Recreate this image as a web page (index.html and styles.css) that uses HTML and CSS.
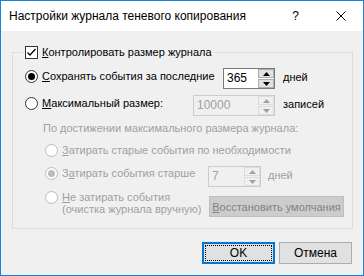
FILE: index.html
```html
<!DOCTYPE html>
<html lang="ru">
<head>
  <meta charset="UTF-8" />
  <title>Настройки журнала теневого копирования</title>
  <link rel="stylesheet" href="styles.css">
</head>
<body>

  <div class="window">
    <div class="titlebar">
      <span class="title">Настройки журнала теневого копирования</span>
      <span class="caption-btn help">?</span>
      <span class="caption-btn">
        <svg width="10" height="10" viewBox="0 0 10 10"><path d="M0.5 0.5 L9.5 9.5 M9.5 0.5 L0.5 9.5" stroke="#000" stroke-width="1" fill="none"/></svg>
      </span>
    </div>

    <div class="client">
      <fieldset class="group">
        <legend class="opt">
          <span class="checkbox">
            <svg width="11" height="11" viewBox="0 0 11 11"><path d="M1.5 5.5 L4 8 L9.5 2" stroke="#000" stroke-width="1.3" fill="none"/></svg>
          </span>
          <span><u>К</u>онтролировать размер журнала</span>
        </legend>

        <div class="row first">
          <div class="opt w-keep"><span class="radio on"></span><span><u>С</u>охранять события за последние</span></div>
          <div class="spinbox sb-keep">
            <span class="value">365</span>
            <span class="spin">
              <span class="arrow"><svg width="7" height="4" viewBox="0 0 7 4"><path d="M0 4 L3.5 0 L7 4 Z"/></svg></span>
              <span class="arrow"><svg width="7" height="4" viewBox="0 0 7 4"><path d="M0 0 L3.5 4 L7 0 Z"/></svg></span>
            </span>
          </div>
          <span class="unit">дней</span>
        </div>

        <div class="row">
          <div class="opt w-max"><span class="radio"></span><span><u>М</u>аксимальный размер:</span></div>
          <div class="spinbox sb-max disabled">
            <span class="value">10000</span>
            <span class="spin">
              <span class="arrow"><svg width="7" height="4" viewBox="0 0 7 4"><path d="M0 4 L3.5 0 L7 4 Z"/></svg></span>
              <span class="arrow"><svg width="7" height="4" viewBox="0 0 7 4"><path d="M0 0 L3.5 4 L7 0 Z"/></svg></span>
            </span>
          </div>
          <span class="unit">записей</span>
        </div>

        <div class="caption">По достижении максимального размера журнала:</div>

        <div class="row sub plain">
          <div class="opt off"><span class="radio"></span><span><u>З</u>атирать старые события по необходимости</span></div>
        </div>

        <div class="row sub old">
          <div class="opt off w-old"><span class="radio on"></span><span>З<u>а</u>тирать события старше</span></div>
          <div class="spinbox sb-old disabled">
            <span class="value">7</span>
            <span class="spin">
              <span class="arrow"><svg width="7" height="4" viewBox="0 0 7 4"><path d="M0 4 L3.5 0 L7 4 Z"/></svg></span>
              <span class="arrow"><svg width="7" height="4" viewBox="0 0 7 4"><path d="M0 0 L3.5 4 L7 0 Z"/></svg></span>
            </span>
          </div>
          <span class="unit off">дней</span>
        </div>

        <div class="row sub last">
          <div class="opt off w-none"><span class="radio"></span><span><u>Н</u>е затирать события<br>(очистка журнала вручную)</span></div>
          <span class="btn btn-reset"><span><u>В</u>осстановить умолчания</span></span>
        </div>
      </fieldset>

      <div class="actions">
        <span class="btn default"><span class="focus">OK</span></span>
        <span class="btn">Отмена</span>
      </div>
    </div>
  </div>

</body>
</html>
```

FILE: styles.css
```css
body {
  margin: 0;
  font-family: "Liberation Sans", Arial, sans-serif;
  font-size: 11px;
  color: #000;
}

.window {
  box-sizing: border-box;
  width: 364px;
  height: 276px;
  border: 1px solid #1883d7;
  background: #f0f0f0;
}

.titlebar {
  display: flex;
  align-items: center;
  height: 30px;
  background: #fff;
}

.title {
  flex: 1;
  padding-left: 8px;
  font-size: 12px;
}

.caption-btn {
  width: 45px;
  height: 30px;
  display: flex;
  align-items: center;
  justify-content: center;
  font-size: 12px;
}

.client {
  padding-top: 15px;
}

u {
  text-decoration: underline;
  text-underline-offset: 1px;
}

/* group box */
.group {
  margin: 0 10px 0 11px;
  padding: 9px 0 11px 12px;
  border: 1px solid #dcdcdc;
  min-width: 0;
}

.group legend {
  padding: 0 2px;
  margin-left: -2px;
  line-height: 13px;
}

.opt {
  display: flex;
  align-items: center;
  gap: 4px;
  line-height: 13px;
}

.checkbox,
.radio {
  box-sizing: border-box;
  flex: none;
  width: 13px;
  height: 13px;
  border: 1px solid #333;
  background: #fff;
  display: flex;
  align-items: center;
  justify-content: center;
}

.radio {
  border-radius: 50%;
}

.radio.on::after {
  content: "";
  width: 7px;
  height: 7px;
  border-radius: 50%;
  background: #000;
}

.off {
  color: #a0a0a0;
}

.off .radio {
  border-color: #bcbcbc;
}

.off .radio.on::after {
  background: #bcbcbc;
}

/* rows */
.row {
  display: flex;
  align-items: flex-start;
  margin-top: 6px;
}

.row.first {
  margin-top: 0;
}

.row .opt {
  margin-top: 2px;
}

.w-keep { width: 198px; }
.w-max { width: 168px; }
.w-old { width: 163px; }
.w-none { width: 164px; align-items: flex-start; line-height: 12px; }

.sub {
  padding-left: 20px;
}

.caption {
  margin: 6px 0 0 18px;
  line-height: 13px;
  color: #a0a0a0;
}

.row.plain { margin-top: 7px; }
.row.old { margin-top: 9px; }
.row.old .opt { margin-top: 1px; }
.row.last { margin-top: 4px; }
.row.last .opt { margin-top: 0; }

.unit {
  margin-left: 8px;
  margin-top: 3px;
  line-height: 13px;
}

.unit.off {
  margin-left: 7px;
}

/* spin edit */
.spinbox {
  box-sizing: border-box;
  display: flex;
  height: 21px;
  border: 1px solid #7a7a7a;
  background: #fff;
}

.sb-keep { width: 52px; }
.sb-max { width: 82px; }
.sb-old { width: 53px; }

.spinbox .value {
  flex: 1;
  padding: 2px 0 0 3px;
  font-size: 12px;
  line-height: 15px;
}

.spin {
  display: flex;
  flex-direction: column;
  gap: 1px;
  width: 16px;
}

.arrow {
  box-sizing: border-box;
  flex: 1;
  display: flex;
  align-items: center;
  justify-content: center;
  border: 1px solid #adadad;
  background: #e1e1e1;
  fill: #000;
}

.spinbox.disabled {
  border-color: #cccccc;
  background: #f0f0f0;
  color: #a0a0a0;
}

.spinbox.disabled .arrow {
  border-color: #dcdcdc;
  background: #f0f0f0;
  fill: #a0a0a0;
}

/* buttons */
.btn {
  box-sizing: border-box;
  display: flex;
  align-items: center;
  justify-content: center;
  width: 73px;
  height: 22px;
  border: 1px solid #adadad;
  background: #e1e1e1;
  font-size: 12px;
  white-space: nowrap;
}

.btn-reset {
  width: 135px;
  height: 21px;
  margin-top: 5px;
  border-color: #bfbfbf;
  background: #cccccc;
  color: #838383;
  font-size: 11px;
}

.btn.default {
  border: 2px solid #0078d7;
  padding: 1px;
}

.btn .focus {
  box-sizing: border-box;
  width: 100%;
  height: 100%;
  display: flex;
  align-items: center;
  justify-content: center;
  border: 1px dotted #000;
}

.actions {
  display: flex;
  justify-content: flex-end;
  gap: 4px;
  margin: 13px 11px 0 0;
}
```
